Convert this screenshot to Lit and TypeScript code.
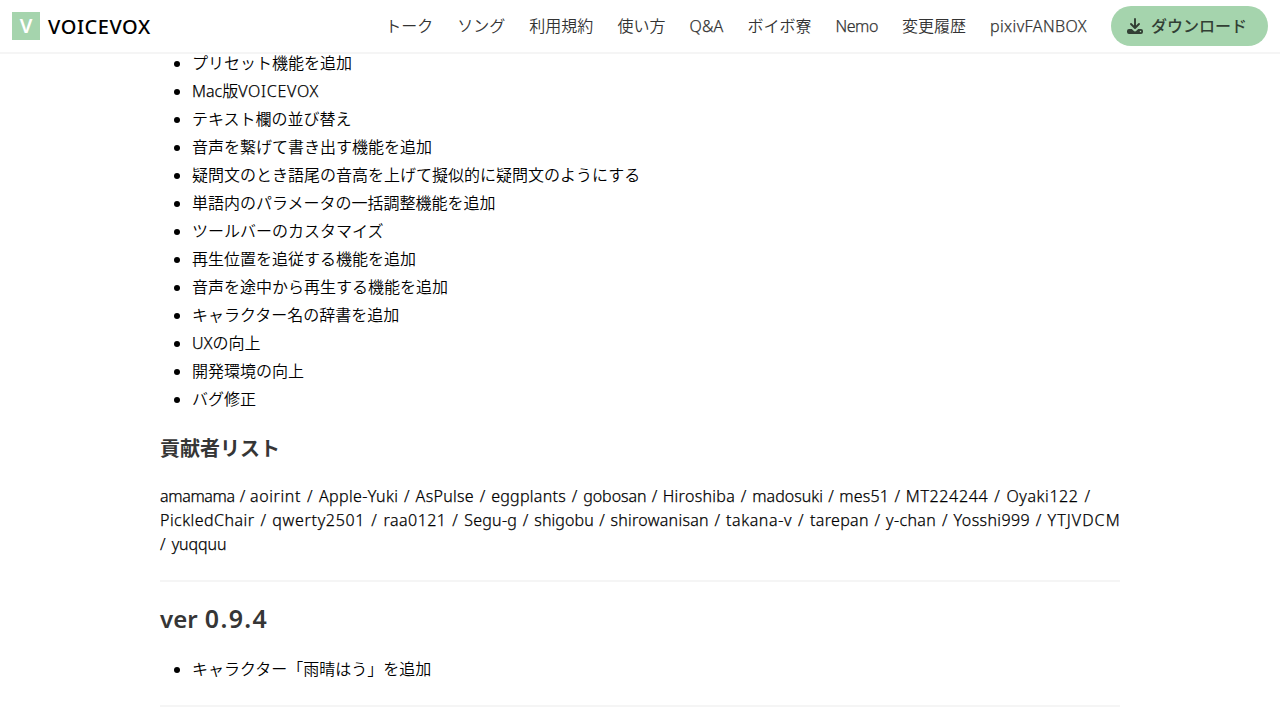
import { LitElement, html, css } from "lit";
import { customElement } from "lit/decorators.js";
import { classMap } from "lit/directives/class-map.js";
import { styleMap } from "lit/directives/style-map.js";

/** A piece of text and its tracking in pixels. */
type Tracked = [text: string, tracking: number];

const NAV: Tracked[] = [
  ["トーク", 0],
  ["ソング", 0],
  ["利用規約", 0],
  ["使い方", 0],
  ["Q&A", 0.2],
  ["ボイボ寮", 0],
  ["Nemo", -0.45],
  ["変更履歴", 0],
  ["pixivFANBOX", 0.4],
];

const CHANGES: Tracked[][] = [
  [["プリセット機能を追加", 0]],
  [["Mac", 0], ["版", 0], ["VOICEVOX", 0.72]],
  [["テキスト欄の並び替え", 0]],
  [["音声を繋げて書き出す機能を追加", 0]],
  [["疑問文のとき語尾の音高を上げて擬似的に疑問文のようにする", 0]],
  [["単語内のパラメータの一括調整機能を追加", 0]],
  [["ツールバーのカスタマイズ", 0]],
  [["再生位置を追従する機能を追加", 0]],
  [["音声を途中から再生する機能を追加", 0]],
  [["キャラクター名の辞書を追加", 0]],
  [["UX", 0.1], ["の向上", 0]],
  [["開発環境の向上", 0]],
  [["バグ修正", 0]],
];

const CONTRIBUTORS: Tracked[][] = [
  [
    ["amamama / ", -0.35],
    ["aoirint / ", 0.6],
    ["Apple-Yuki / ", 0.34],
    ["AsPulse / ", 0.3],
    ["eggplants / ", 0.28],
    ["gobosan / ", -0.04],
    ["Hiroshiba / ", 0.3],
    ["madosuki / ", 0.02],
    ["mes51 / ", 0.16],
    ["MT224244 / ", 0.65],
    ["Oyaki122 /", 0.58],
  ],
  [
    ["PickledChair / ", 0.47],
    ["qwerty2501 / ", 0.69],
    ["raa0121 / ", 0.47],
    ["Segu-g / ", 0.27],
    ["shigobu / ", 0.1],
    ["shirowanisan / ", 0.27],
    ["takana-v / ", 0.6],
    ["tarepan / ", 0.32],
    ["y-chan / ", 0.37],
    ["Yosshi999 / ", 0.4],
    ["YTJVDCM", 1.05],
  ],
  [["/ ", 0.4], ["yuqquu", -0.1]],
];

const tracked = ([text, tracking]: Tracked) =>
  html`<span
    class=${classMap({ latin: /^[\x20-\x7e]+$/.test(text) })}
    style=${styleMap({ letterSpacing: `${tracking}px` })}
    >${text}</span
  >`;

const latin = css`
  .latin {
    -webkit-text-stroke: 0.25px currentColor;
  }
`;

@customElement("site-header")
class SiteHeader extends LitElement {
  static styles = [
    latin,
    css`
      :host {
        display: flex;
        justify-content: space-between;
        box-sizing: border-box;
        height: 52px;
        padding: 0 12px;
        background: #fff;
        box-shadow: 0 2px 0 #f5f5f5;
        position: relative;
        z-index: 1;
      }
      .brand {
        display: flex;
        align-items: center;
        gap: 8px;
        color: #000;
        font-size: 20px;
        font-weight: 500;
        letter-spacing: 0.55px;
      }
      .name {
        padding-top: 1px;
      }
      .mark {
        display: grid;
        place-items: center;
        width: 28px;
        height: 28px;
        background: #a5d4ad;
        color: #fff;
        font-weight: 600;
        letter-spacing: 0;
        line-height: 28px;
      }
      .menu {
        display: flex;
        align-items: center;
        gap: 24px;
        color: #333;
        white-space: nowrap;
      }
      .button {
        display: flex;
        align-items: center;
        box-sizing: border-box;
        gap: 8px;
        width: 157px;
        height: 40px;
        padding: 0 16px;
        border-radius: 20px;
        background: #a5d4ad;
        color: #323f34;
        font-weight: 500;
      }
      .icon {
        flex: none;
        width: 16px;
        height: 16px;
      }
    `,
  ];

  render() {
    return html`
      <div class="brand"><span class="mark">V</span><span class="name">VOICEVOX</span></div>
      <nav class="menu">
        ${NAV.map(tracked)}
        <a class="button">
          <svg class="icon" viewBox="0 0 16 16" fill="none">
            <path d="M8 1v8.6M4 6l4 4 4-4" stroke="currentColor" stroke-width="1.9" stroke-linecap="round" stroke-linejoin="round" />
            <path
              fill="currentColor"
              fill-rule="evenodd"
              d="M2 11h2.8l1.8 1.7a2 2 0 0 0 2.8 0L11.2 11H14a2 2 0 0 1 2 2v1a2 2 0 0 1-2 2H2a2 2 0 0 1-2-2v-1a2 2 0 0 1 2-2zM13.5 12.75a.75.75 0 1 0 0 1.5.75.75 0 0 0 0-1.5z"
            />
          </svg>
          <span>ダウンロード</span>
        </a>
      </nav>
    `;
  }
}

@customElement("app-root")
class AppRoot extends LitElement {
  static styles = [
    latin,
    css`
      :host {
        display: block;
        height: 720px;
        overflow: hidden;
        background: #fff;
        color: #000;
        font-family: "Noto Sans", "Noto Sans CJK JP", sans-serif;
        font-size: 16px;
        font-weight: 350;
        line-height: 24px;
      }
      .content {
        width: 960px;
        margin: -1px auto 0;
      }
      .list {
        display: flex;
        flex-direction: column;
        gap: 4px;
        margin: 0;
        padding: 0 0 0 32px;
        list-style: disc outside;
      }
      .list li {
        display: list-item;
        height: 24px;
      }
      .subtitle {
        margin: 26px 0 24px;
        color: #363636;
        font-size: 20px;
        font-weight: 600;
        line-height: 23px;
      }
      .title {
        height: 27px;
        margin: 0 0 24px;
        color: #363636;
        font-size: 24px;
        font-weight: 600;
        line-height: 25px;
      }
      .number {
        margin-left: 1px;
        font-size: 25px;
        letter-spacing: 1.3px;
      }
      .names {
        margin: 0;
        word-spacing: 1.2px;
        white-space: pre;
      }
      .rule {
        height: 2px;
        margin: 24px 0;
        border: 0;
        background: #f5f5f5;
      }
    `,
  ];

  render() {
    return html`
      <site-header></site-header>
      <main class="content">
        <ul class="list">
          ${CHANGES.map((parts) => html`<li>${parts.map(tracked)}</li>`)}
        </ul>
        <h3 class="subtitle">貢献者リスト</h3>
        <div class="names">${CONTRIBUTORS.map((line) => html`<div>${line.map(tracked)}</div>`)}</div>
        <hr class="rule" />
        <h2 class="title">ver <span class="number">0.9.4</span></h2>
        <ul class="list">
          <li>キャラクター「雨晴はう」を追加</li>
        </ul>
        <hr class="rule" />
      </main>
    `;
  }
}
